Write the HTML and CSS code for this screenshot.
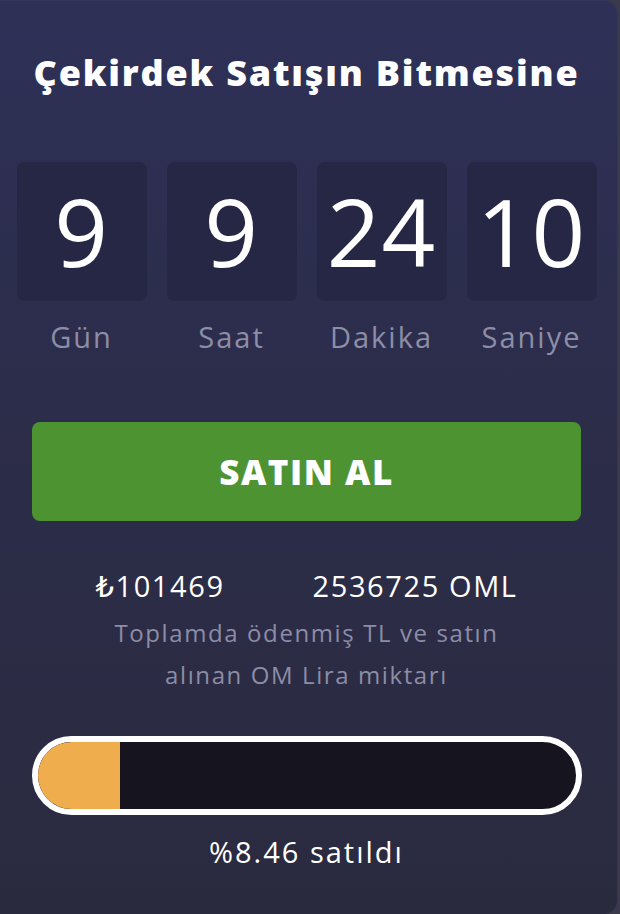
FILE: index.html
```html
<!DOCTYPE html>
<html lang="tr">
<head>
    <meta charset="UTF-8">
    <title>Çekirdek Satışı</title>
    <link rel="stylesheet" href="styles.css">
</head>
<body>

    <div class="card">
        <h1 class="title">Çekirdek Satışın Bitmesine</h1>

        <div class="timer">
            <div class="unit">
                <div class="box">9</div>
                <div class="label">Gün</div>
            </div>
            <div class="unit">
                <div class="box">9</div>
                <div class="label">Saat</div>
            </div>
            <div class="unit">
                <div class="box">24</div>
                <div class="label">Dakika</div>
            </div>
            <div class="unit">
                <div class="box">10</div>
                <div class="label">Saniye</div>
            </div>
        </div>

        <button class="buy">SATIN AL</button>

        <div class="totals">
            <span>₺101469</span>
            <span>2536725 OML</span>
        </div>
        <p class="note">Toplamda ödenmiş TL ve satın<br>alınan OM Lira miktarı</p>

        <div class="progress">
            <div class="fill" style="width: 15.3%"></div>
        </div>
        <div class="sold">%8.46 satıldı</div>
    </div>

</body>
</html>
```

FILE: styles.css
```css
body {
    margin: 0;
    background-color: #3a3a4b;
    font-family: "Open Sans", "DejaVu Sans", sans-serif;
    color: #fff;
}

.card {
    min-height: 914px;
    box-sizing: border-box;
    margin-right: 2px;
    padding-right: 4px;
    background: linear-gradient(180deg, #2e3057 0%, #2c2d4a 45%, #2a2a3f 100%);
    border-top: 1px solid #35375a;
    border-right: 1px solid #35375a;
    border-radius: 0 14px 14px 0;
    text-align: center;
    overflow: hidden;
}

.title {
    margin: 52px 0 0;
    font-size: 36px;
    line-height: 40px;
    font-weight: 800;
    letter-spacing: 1.8px;
}

.timer {
    display: flex;
    justify-content: center;
    gap: 20px;
    margin-top: 69px;
}

.unit {
    width: 130px;
}

.box {
    height: 139px;
    background-color: #262744;
    border-radius: 8px;
    font-size: 94px;
    line-height: 139px;
    font-weight: 400;
    letter-spacing: 1px;
}

.label {
    margin-top: 18px;
    font-size: 29px;
    line-height: 36px;
    letter-spacing: 2px;
    color: #8c8da6;
}

.buy {
    display: block;
    width: 549px;
    height: 99px;
    margin: 67px auto 0;
    background-color: #4e9331;
    color: #fff;
    border: none;
    border-radius: 8px;
    font-family: inherit;
    font-size: 35px;
    font-weight: 800;
    letter-spacing: 1.5px;
}

.totals {
    display: flex;
    justify-content: center;
    gap: 88px;
    margin-top: 47px;
    font-size: 29px;
    line-height: 36px;
    letter-spacing: 1.6px;
}

.note {
    margin: 8px 0 0;
    font-size: 24px;
    line-height: 42px;
    letter-spacing: 1.6px;
    color: #8c8da6;
}

.progress {
    box-sizing: border-box;
    width: 550px;
    height: 79px;
    margin: 40px auto 0;
    border: 6px solid #fff;
    border-radius: 40px;
    background-color: #16151f;
    overflow: hidden;
}

.fill {
    height: 100%;
    background-color: #f0ad4e;
}

.sold {
    margin-top: 19px;
    font-size: 29px;
    line-height: 36px;
    letter-spacing: 2px;
}
```
